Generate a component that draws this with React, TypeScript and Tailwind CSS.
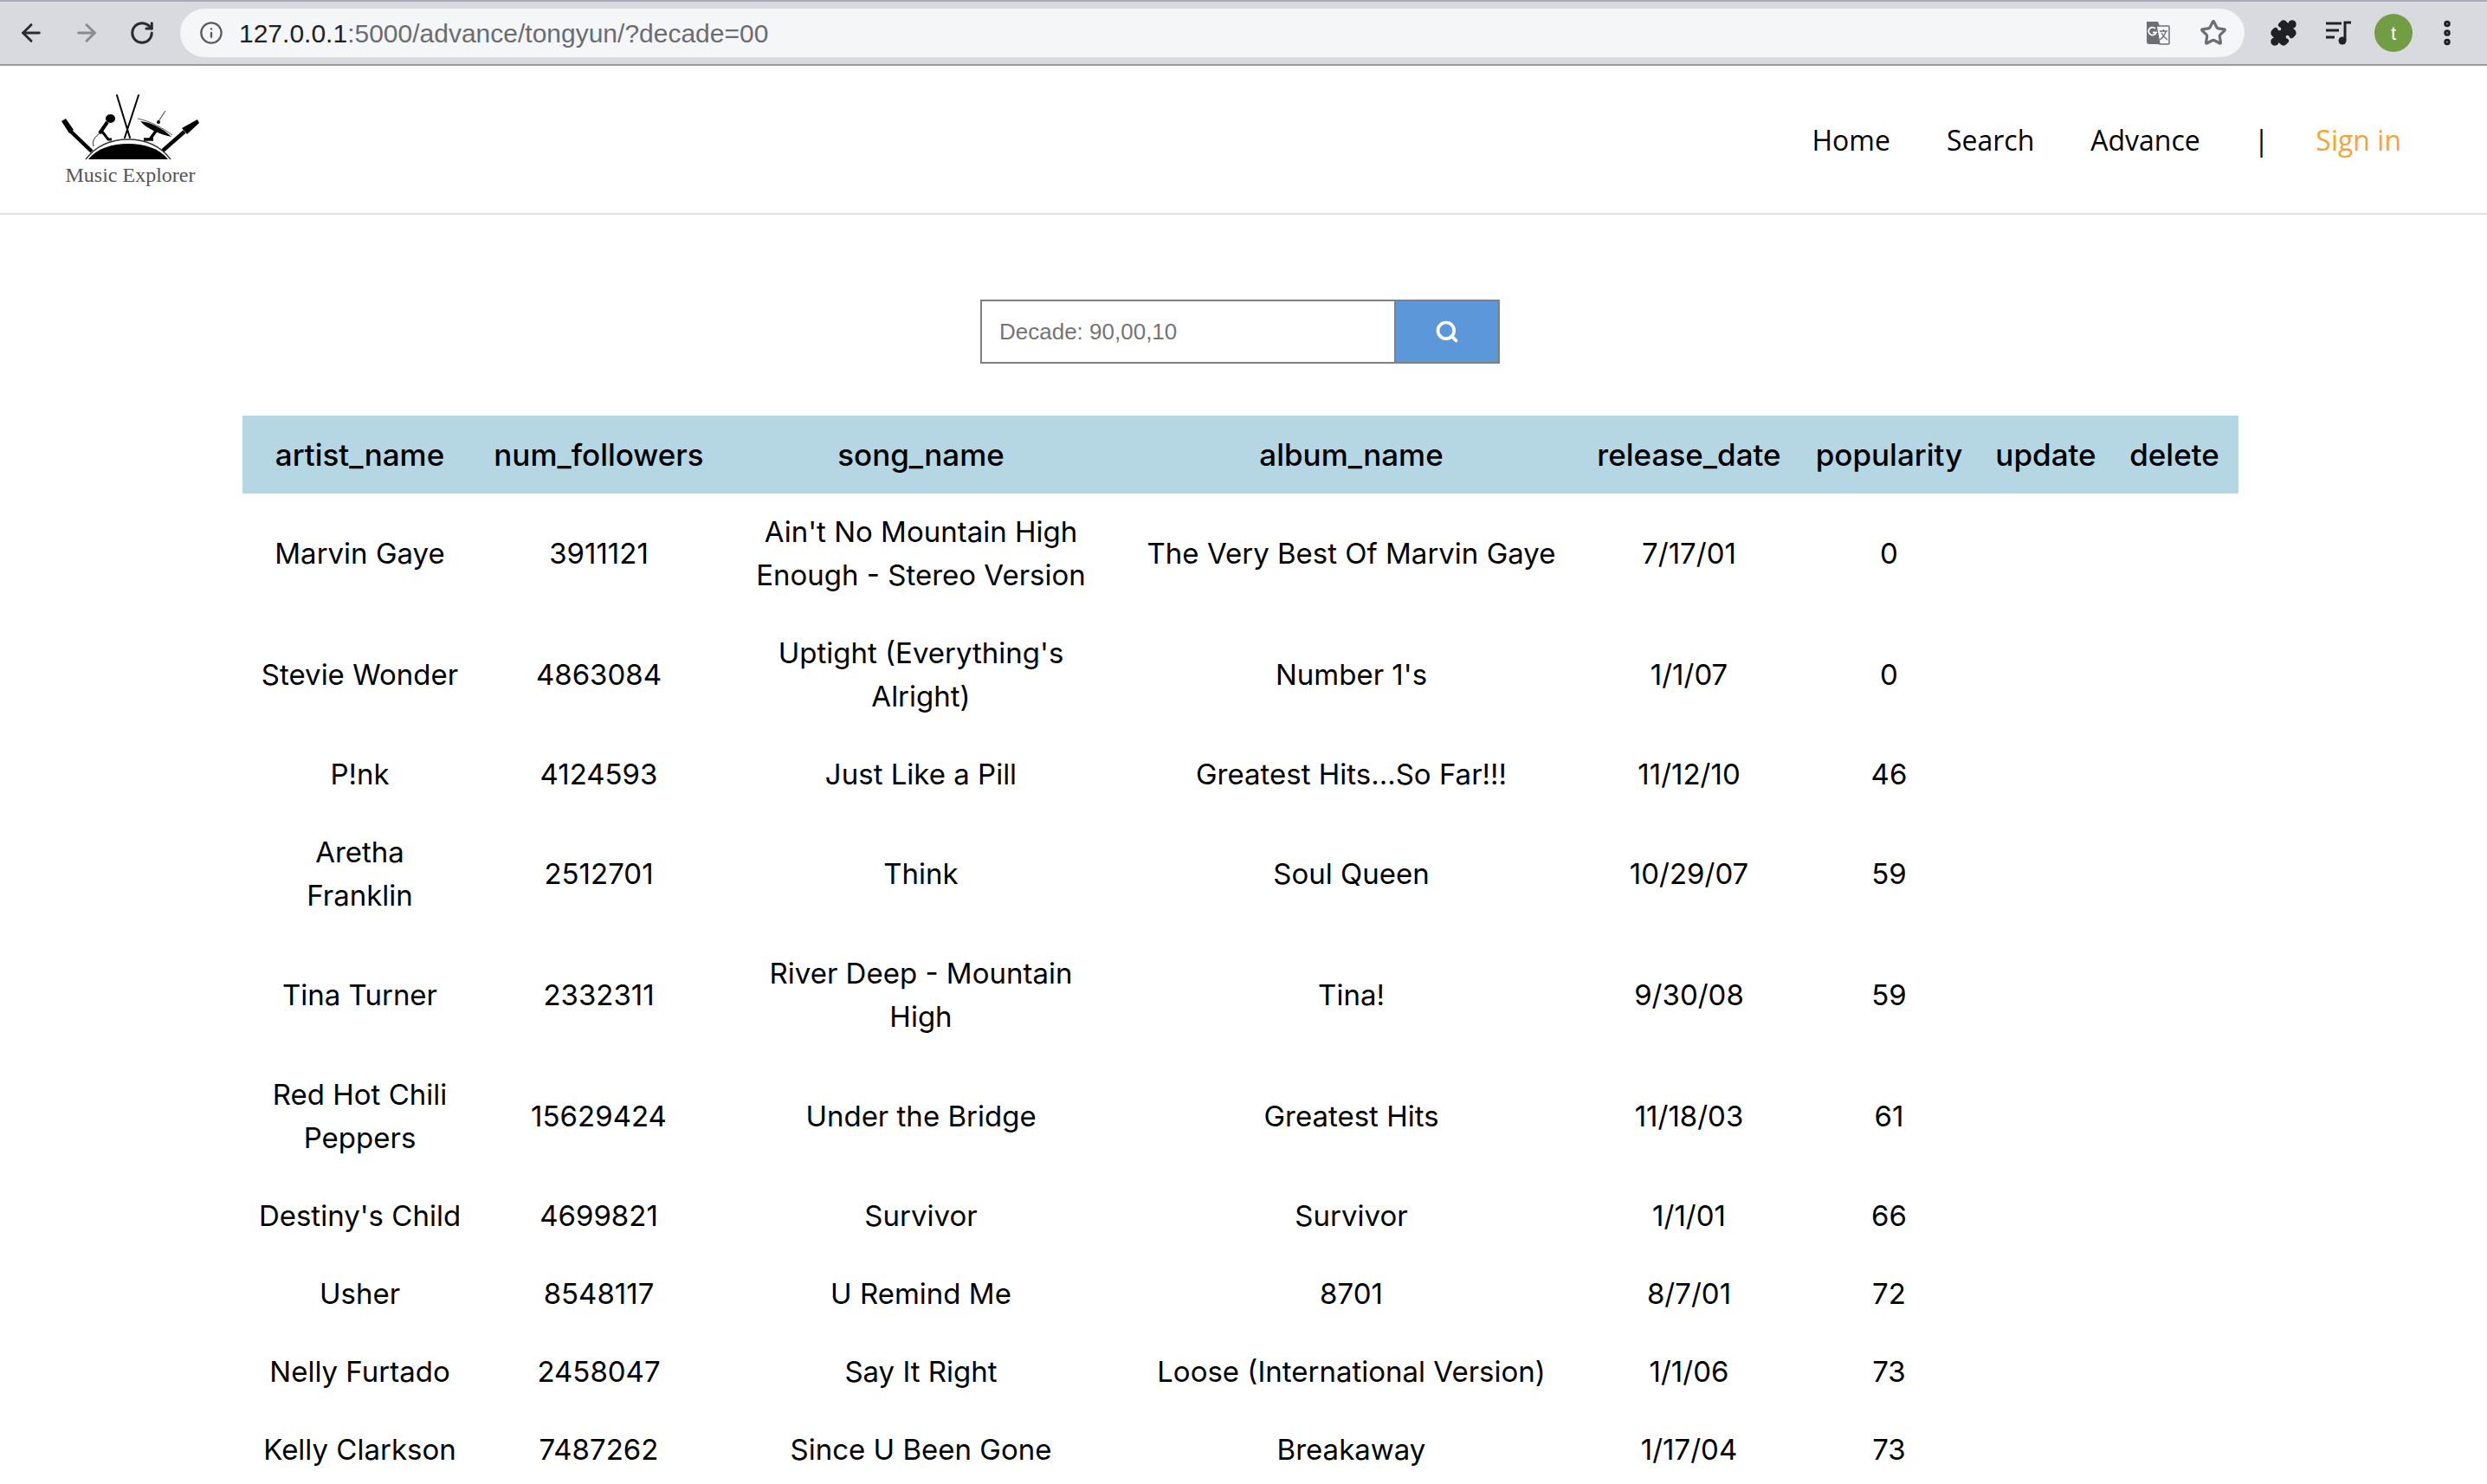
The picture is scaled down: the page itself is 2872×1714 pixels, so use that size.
import { ArrowLeft, ArrowRight, EllipsisVertical, Info, Puzzle, RotateCw, Search, Star } from 'lucide-react';

const columns = [
  { name: 'artist_name', width: 'w-[272px]' },
  { name: 'num_followers', width: 'w-[280px]' },
  { name: 'song_name', width: 'w-[464px]' },
  { name: 'album_name', width: 'w-[530px]' },
  { name: 'release_date', width: 'w-[250px]' },
  { name: 'popularity', width: 'w-[212px]' },
  { name: 'update', width: 'w-[150px]' },
  { name: 'delete', width: 'w-[147px]' },
];

const rows = [
  ['Marvin Gaye', '3911121', "Ain't No Mountain High\nEnough - Stereo Version", 'The Very Best Of Marvin Gaye', '7/17/01', '0'],
  ['Stevie Wonder', '4863084', "Uptight (Everything's\nAlright)", "Number 1's", '1/1/07', '0'],
  ['P!nk', '4124593', 'Just Like a Pill', 'Greatest Hits...So Far!!!', '11/12/10', '46'],
  ['Aretha\nFranklin', '2512701', 'Think', 'Soul Queen', '10/29/07', '59'],
  ['Tina Turner', '2332311', 'River Deep - Mountain\nHigh', 'Tina!', '9/30/08', '59'],
  ['Red Hot Chili\nPeppers', '15629424', 'Under the Bridge', 'Greatest Hits', '11/18/03', '61'],
  ["Destiny's Child", '4699821', 'Survivor', 'Survivor', '1/1/01', '66'],
  ['Usher', '8548117', 'U Remind Me', '8701', '8/7/01', '72'],
  ['Nelly Furtado', '2458047', 'Say It Right', 'Loose (International Version)', '1/1/06', '73'],
  ['Kelly Clarkson', '7487262', 'Since U Been Gone', 'Breakaway', '1/17/04', '73'],
];

function Logo() {
  return (
    <svg width="165" height="82" viewBox="30 15 165 82" className="block">
      {/* dome */}
      <path d="M64 94 C74 81 92 76 110 76 C128 76 146 81 156 94 Z" fill="#000" />
      <path d="M61 94 C74 77 92 71 110 71 C128 71 146 77 159 94" fill="none" stroke="#333" strokeWidth="1.4" />
      {/* drum sticks */}
      <path d="M97 20 L112 69 M122 20 L106 69" stroke="#000" strokeWidth="2" strokeLinecap="round" />
      {/* mic */}
      <ellipse cx="89.5" cy="47" rx="5.5" ry="5" fill="#000" />
      <path d="M86 51 L77 64" stroke="#000" strokeWidth="4" />
      <path d="M77 64 C72 68 68 72 70 79" fill="none" stroke="#222" strokeWidth="1" />
      <path d="M80 62 L87 71 L91 71" fill="none" stroke="#000" strokeWidth="3" />
      {/* cymbal */}
      <path d="M124 50 C136 51 150 58 160 68 C146 65 132 59 124 50 Z" fill="#000" />
      <path d="M121 47 C136 50 150 58 161 66" fill="none" stroke="#555" strokeWidth="1" />
      <path d="M153 38 L145 50" stroke="#555" strokeWidth="1.2" />
      <circle cx="145" cy="51" r="2" fill="#000" />
      <path d="M143 60 L135 71 M128 71 L139 71" stroke="#000" strokeWidth="3.4" />
      {/* left guitar */}
      <path d="M33 50 L38 47 L47 60 L42 64 Z" fill="#000" />
      <path d="M44 62 L68 85" stroke="#000" strokeWidth="4.5" />
      {/* right guitar */}
      <path d="M172 58 L190 48 L192 52 L178 65 Z" fill="#000" />
      <path d="M175 62 L150 84" stroke="#000" strokeWidth="4.5" />
    </svg>
  );
}

function TranslateIcon() {
  return (
    <svg width="28" height="28" viewBox="0 0 28 28">
      <path d="M1 1 H14 L25 27 H4 Q1 27 1 24 Z" fill="#6e6f73" />
      <path d="M12 6 H26 Q27 6 27 7 V26 Q27 27 26 27 H16 Z" fill="#f5f6f8" stroke="#6e6f73" strokeWidth="1.5" />
      <path d="M11 9 A4.5 4.5 0 1 0 12 13.5 H8" fill="none" stroke="#fff" strokeWidth="1.8" />
      <path d="M16 12 H25 M20.5 10 V12 M23 12 C22 17 19 20 16 22 M18 14 C20 18 22 20 25 22" fill="none" stroke="#6e6f73" strokeWidth="1.3" />
    </svg>
  );
}

function MediaIcon() {
  return (
    <svg width="32" height="30" viewBox="0 0 32 30" className="text-[#202124]">
      <path d="M1 4 H19 M1 12 H16 M1 20 H11" stroke="currentColor" strokeWidth="3" fill="none" />
      <path d="M23 24 V3 H30" stroke="currentColor" strokeWidth="3" fill="none" />
      <ellipse cx="20" cy="24" rx="4.5" ry="4.5" fill="currentColor" />
    </svg>
  );
}

function Toolbar() {
  return (
    <div className="h-[76px] bg-[#d9dae0] border-t-2 border-t-[#a9a9bb] border-b-2 border-b-[#98989d] flex items-center font-['Liberation_Sans',sans-serif]">
      <div className="w-[208px] pl-[20px] flex items-center gap-[32px] shrink-0">
        <ArrowLeft className="w-[32px] h-[32px] text-[#2b2c2e]" strokeWidth={2.2} />
        <ArrowRight className="w-[32px] h-[32px] text-[#8a8b8f]" strokeWidth={2.2} />
        <RotateCw className="w-[30px] h-[30px] ml-[1px] text-[#2b2c2e]" strokeWidth={2.4} />
      </div>
      <div className="w-[2384px] h-[56px] bg-[#f5f6f8] rounded-full flex items-center pl-[22px] pr-[20px]">
        <Info className="w-[28px] h-[28px] text-[#5b5c60]" strokeWidth={2} />
        <span className="ml-[18px] text-[30px] text-[#6b6c70]"><span className="text-[#202124]">127.0.0.1</span>:5000/advance/tongyun/?decade=00</span>
        <div className="ml-auto flex items-center gap-[34px]">
          <TranslateIcon />
          <Star className="w-[32px] h-[32px] text-[#6e6f73]" strokeWidth={2.4} />
        </div>
      </div>
      <div className="flex items-center flex-1 pl-[29px]">
        <Puzzle className="w-[32px] h-[32px] text-[#202124] fill-[#202124]" strokeWidth={2} />
        <div className="ml-[32px]"><MediaIcon /></div>
        <div className="ml-[25px] w-[44px] h-[44px] rounded-full bg-[#719d45] text-white text-[22px] flex items-center justify-center">t</div>
        <EllipsisVertical className="ml-[22px] w-[36px] h-[36px] text-[#202124]" strokeWidth={3} />
      </div>
    </div>
  );
}

function Nav() {
  return (
    <div className="h-[172px] border-b-2 border-b-[#e0e0e0] flex justify-between pl-[68px] pr-[99px] bg-white">
      <div className="flex flex-col items-center pt-[29px]">
        <Logo />
        <span className="text-[#555] text-[24px] leading-[30px] font-['Liberation_Serif',serif]">Music Explorer</span>
      </div>
      <nav className="flex items-center text-[32px] leading-[50px] text-black font-['Open_Sans',sans-serif] mt-[2px]">
        <span>Home</span>
        <span className="ml-[65px]">Search</span>
        <span className="ml-[65px]">Advance</span>
        <span className="ml-[62px]">|</span>
        <span className="ml-[54px] text-[#f5a331]">Sign in</span>
      </nav>
    </div>
  );
}

export default function App() {
  return (
    <div className="w-[2872px] h-[1714px] overflow-hidden bg-white">
      <Toolbar />
      <Nav />
      <main className="w-[2864px] flex flex-col items-center pt-[98px]">
        <form className="flex h-[74px] w-[600px] border-2 border-[#808080] font-['Liberation_Sans',sans-serif]">
          <input
            readOnly
            placeholder="Decade: 90,00,10"
            className="flex-1 min-w-0 px-[20px] text-[26px] placeholder:text-[#757575] outline-none"
          />
          <button type="button" className="w-[120px] bg-[#5b97d9] border-l-2 border-l-[#808080] flex items-center justify-center">
            <Search className="w-[28px] h-[28px] text-white" strokeWidth={3.2} />
          </button>
        </form>
        <table className="mt-[60px] w-[2305px] table-fixed border-collapse text-center text-[33px] leading-[50px] text-black font-['Inter',sans-serif]">
          <colgroup>
            {columns.map(col => (
              <col key={col.name} className={col.width} />
            ))}
          </colgroup>
          <thead>
            <tr className="bg-[#b5d6e3]">
              {columns.map(col => (
                <th key={col.name} className="py-[20px] text-[35px] font-medium">{col.name}</th>
              ))}
            </tr>
          </thead>
          <tbody>
            {rows.map(row => (
              <tr key={row[0]}>
                {row.map((cell, i) => (
                  <td key={i} className="pt-[19px] pb-[21px] whitespace-pre-line font-normal">{cell}</td>
                ))}
                <td />
                <td />
              </tr>
            ))}
          </tbody>
        </table>
      </main>
    </div>
  );
}
